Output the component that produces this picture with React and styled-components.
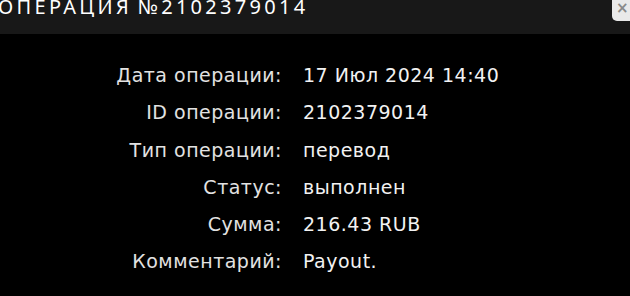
import React from "react";
import styled, { createGlobalStyle } from "styled-components";

const Global = createGlobalStyle`
  html, body { margin: 0; padding: 0; background: #000; }
  body { width: 630px; height: 296px; overflow: hidden; }
`;

const Modal = styled.div`
  width: 630px;
  height: 296px;
  background: #000;
  display: flex;
  flex-direction: column;
  overflow: hidden;
`;

const Header = styled.div`
  position: relative;
  height: 34px;
  background: #181818;
  display: flex;
  align-items: flex-start;
  overflow: hidden;
`;

const Title = styled.h2`
  margin: -6px 0 0 -2px;
  font-family: "Noto Sans", sans-serif;
  font-weight: 400;
  font-size: 20px;
  line-height: 26px;
  letter-spacing: 3.3px;
  word-spacing: -3px;
  color: #fff;
  text-transform: uppercase;
  white-space: nowrap;
`;

const Close = styled.button`
  position: absolute;
  top: 0;
  right: 0;
  width: 18px;
  height: 21px;
  padding: 0 0 0 4px;
  border: 0;
  border-radius: 0 0 0 5px;
  background: #e9e9e9;
  color: #8a8a8a;
  font-family: "DejaVu Sans", sans-serif;
  font-weight: 700;
  font-size: 15px;
  line-height: 16px;
  display: flex;
  align-items: flex-start;
  overflow: hidden;
`;

const Details = styled.dl`
  margin: 0;
  padding: 23px 0 0 0;
  display: grid;
  grid-template-columns: 282px 1fr;
  column-gap: 21px;
  row-gap: 0;
  font-family: "DejaVu Sans", sans-serif;
  font-size: 19px;
  line-height: 37.3px;
  letter-spacing: 0.5px;
`;

const Label = styled.dt`
  margin: 0;
  text-align: right;
  color: #e2e2e2;
`;

const Value = styled.dd`
  margin: 0;
  color: #f2f2f2;
`;

const rows = [
  ["Дата операции:", "17 Июл 2024 14:40"],
  ["ID операции:", "2102379014"],
  ["Тип операции:", "перевод"],
  ["Статус:", "выполнен"],
  ["Сумма:", "216.43 RUB"],
  ["Комментарий:", "Payout."],
];

export default function App() {
  return (
    <Modal>
      <Global />
      <Header>
        <Title>Операция №2102379014</Title>
        <Close aria-label="Закрыть">×</Close>
      </Header>
      <Details>
        {rows.map(([l, v]) => (
          <React.Fragment key={l}>
            <Label>{l}</Label>
            <Value>{v}</Value>
          </React.Fragment>
        ))}
      </Details>
    </Modal>
  );
}
